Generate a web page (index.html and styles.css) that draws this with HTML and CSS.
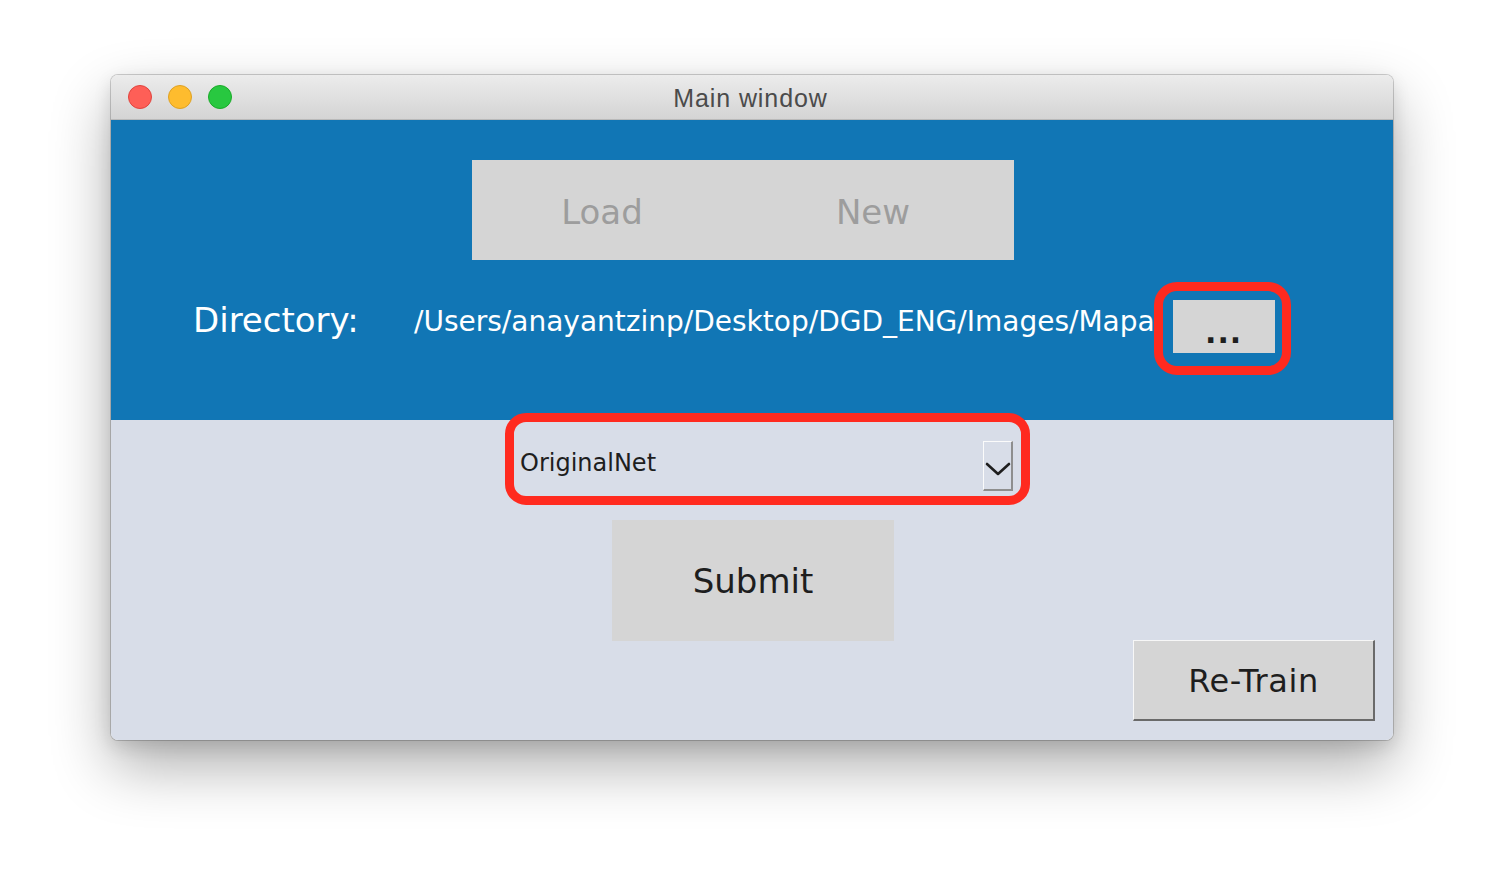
FILE: index.html
```html
<!DOCTYPE html>
<html>
<head>
<meta charset="utf-8">
<title>Main window</title>
<link rel="stylesheet" href="styles.css">
</head>
<body>
<div class="window">
  <div class="titlebar">
    <div class="lights">
      <span class="light red"></span>
      <span class="light yellow"></span>
      <span class="light green"></span>
    </div>
    <div class="title">Main window</div>
  </div>
  <div class="top">
    <div class="segmented">
      <button class="seg">Load</button>
      <button class="seg">New</button>
    </div>
    <div class="dir-row">
      <div class="dir-label">Directory:</div>
      <div class="dir-path">/Users/anayantzinp/Desktop/DGD_ENG/Images/Mapa</div>
      <div class="ring-wrap">
        <button class="browse">...</button>
      </div>
    </div>
  </div>
  <div class="bottom">
    <div class="combo">
      <span class="combo-text">OriginalNet</span>
      <span class="combo-arrow">
        <svg width="26" height="16" viewBox="0 0 26 16"><polyline points="2,3 13,13 24,3" fill="none" stroke="#1e1e1e" stroke-width="2.6" stroke-linecap="round" stroke-linejoin="round"/></svg>
      </span>
    </div>
    <button class="submit">Submit</button>
    <button class="retrain">Re-Train</button>
  </div>
</div>
</body>
</html>
```

FILE: styles.css
```css
html, body {
  margin: 0;
  padding: 0;
  background: #ffffff;
}
body {
  padding: 75px 0 0 111px;
  height: 888px;
  box-sizing: border-box;
  overflow: hidden;
}
button {
  font: inherit;
  margin: 0;
  cursor: default;
}
.window {
  width: 1282px;
  height: 665px;
  border-radius: 7px;
  overflow: hidden;
  display: flex;
  flex-direction: column;
  box-shadow: 0 0 0 1px rgba(0,0,0,0.18), 0 26px 60px rgba(0,0,0,0.32), 0 6px 18px rgba(0,0,0,0.12);
  font-family: "DejaVu Sans", sans-serif;
}
.titlebar {
  height: 44px;
  flex: none;
  display: flex;
  align-items: center;
  position: relative;
  background: linear-gradient(#ececec, #d4d4d4);
  border-bottom: 1px solid #b9b9b9;
}
.lights {
  display: flex;
  gap: 16px;
  padding-left: 17px;
}
.light {
  width: 24px;
  height: 24px;
  border-radius: 50%;
  box-sizing: border-box;
}
.light.red { background: #fe5f57; border: 1px solid #e0443e; }
.light.yellow { background: #febc2e; border: 1px solid #dea123; }
.light.green { background: #28c840; border: 1px solid #1aab29; }
.title {
  position: absolute;
  left: 0;
  right: 0;
  top: 0;
  bottom: 0;
  display: flex;
  align-items: center;
  justify-content: center;
  font-family: "Liberation Sans", sans-serif;
  font-size: 25px;
  letter-spacing: 0.9px;
  color: #4b4b4b;
  padding-top: 2px;
  padding-right: 3px;
  pointer-events: none;
}
.top {
  height: 300px;
  flex: none;
  background: #1176b5;
  display: flex;
  flex-direction: column;
  padding-top: 40px;
  box-sizing: border-box;
}
.segmented {
  margin-left: 361px;
  width: 542px;
  height: 100px;
  display: flex;
  background: #d5d5d5;
}
.seg {
  flex: 1;
  border: none;
  background: transparent;
  font-size: 34px;
  color: #9d9d9d;
  padding: 4px 11px 0 0;
}
.dir-row {
  display: flex;
  align-items: flex-start;
  margin-top: 31px;
  padding-left: 82px;
}
.dir-label {
  font-size: 34px;
  color: #ffffff;
  margin-top: 9px;
  width: 169px;
  white-space: nowrap;
}
.dir-path {
  flex: none;
  font-size: 28px;
  color: #ffffff;
  margin-left: 52px;
  margin-top: 14px;
  white-space: nowrap;
}
.ring-wrap {
  flex: none;
  margin-left: 8px;
  padding: 9px 7px 13px 10px;
  border-radius: 14px;
  outline: 9px solid #ff2a1f;
  outline-offset: 0;
}
.browse {
  display: flex;
  align-items: center;
  justify-content: center;
  width: 102px;
  height: 53px;
  border: none;
  background: #d5d5d5;
  color: #1e1e1e;
  font-size: 30px;
  font-weight: bold;
  letter-spacing: 1px;
  padding: 12px 0 0 0;
  box-sizing: border-box;
}
.bottom {
  flex: 1;
  background: #d8dde8;
  display: flex;
  flex-direction: column;
}
.combo {
  margin-top: 2px;
  margin-left: 403px;
  width: 507px;
  height: 74px;
  box-sizing: border-box;
  display: flex;
  align-items: center;
  padding-left: 6px;
  padding-right: 8px;
  border-radius: 12px;
  outline: 9px solid #ff2a1f;
  outline-offset: 0;
  position: relative;
}
.combo-text {
  flex: 1;
  font-size: 24px;
  color: #1e1e1e;
  padding-top: 7px;
}
.combo-arrow {
  align-self: flex-end;
  margin-bottom: 5px;
  width: 30px;
  height: 50px;
  box-sizing: border-box;
  border-top: 1px solid #fbfbfb;
  border-left: 1px solid #fbfbfb;
  border-right: 2px solid #8e8e8e;
  border-bottom: 2px solid #8e8e8e;
  display: flex;
  align-items: center;
  justify-content: center;
  padding-top: 6px;
}
.submit {
  margin-top: 24px;
  margin-left: 501px;
  width: 282px;
  height: 121px;
  border: none;
  background: #d5d5d5;
  color: #1e1e1e;
  font-size: 34px;
  padding: 0;
}
.retrain {
  align-self: flex-end;
  margin-top: -1px;
  margin-right: 18px;
  width: 242px;
  height: 81px;
  box-sizing: border-box;
  background: #d5d5d5;
  border-top: 1px solid #f7f7f7;
  border-left: 1px solid #f7f7f7;
  border-right: 2px solid #6a6a6a;
  border-bottom: 2px solid #6a6a6a;
  color: #1e1e1e;
  font-size: 32px;
  letter-spacing: 0.6px;
  padding: 2px 0 0 0;
}
```
